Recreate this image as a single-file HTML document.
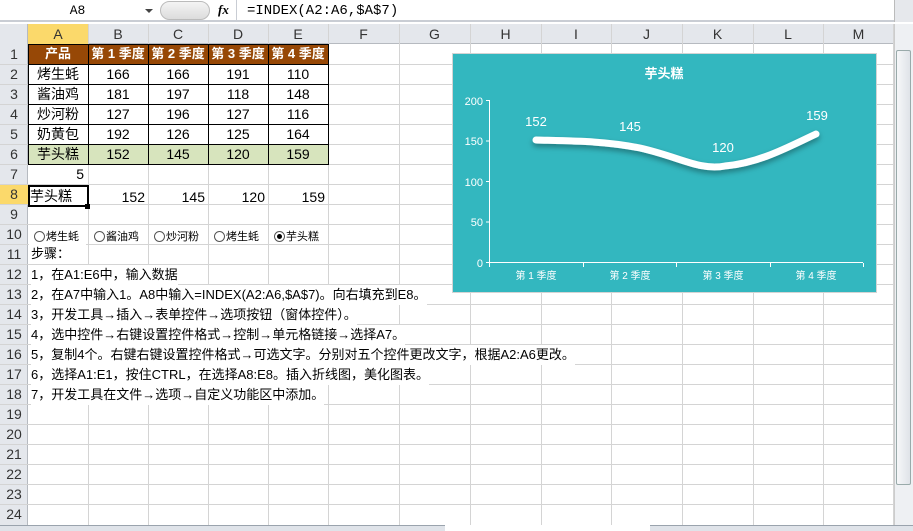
<!DOCTYPE html>
<html><head><meta charset="utf-8"><style>
*{margin:0;padding:0;box-sizing:border-box}
body{width:913px;height:531px;overflow:hidden;background:#fff;font-family:"Liberation Sans","Noto Sans CJK SC",sans-serif;font-size:13px;position:relative;color:#000}
.a{position:absolute}
.grid{left:28px;top:44px;width:866px;height:481px;
background:
linear-gradient(#fff,#fff) 0 0/0 0 no-repeat;
}
.vl{position:absolute;top:24px;width:1px;height:501px;background:#d4d4d4}
.hl{position:absolute;left:0;width:894px;height:1px;background:#d4d4d4}
.ch{position:absolute;top:24px;height:20px;text-align:center;line-height:20px;font-size:14px;color:#333}
.rh{position:absolute;left:0;width:28px;height:20px;text-align:center;line-height:20px;font-size:14px;color:#333;font-family:"Liberation Sans Narrow","Liberation Sans",sans-serif}
.c{position:absolute;height:20px;line-height:20px;text-align:center;font-size:14px;width:60px}
.t{position:absolute;left:31px;height:20px;line-height:20px;font-size:13px;white-space:nowrap}
.rb{position:absolute;top:230px;font-size:11px;line-height:14px;white-space:nowrap}
.rb i{display:inline-block;width:11px;height:11px;border:1px solid #555;border-radius:50%;vertical-align:-2px;margin-right:1px;position:relative}
</style></head><body>
<!-- formula bar -->
<div class="a" style="left:0;top:0;width:913px;height:22px;background:#fff;border-bottom:2px solid #c9cdd4"></div>
<div class="a" style="left:0;top:0;width:155px;height:22px;text-align:center;line-height:22px;font-family:'Liberation Mono',monospace;font-size:13px">A8</div>
<div class="a" style="left:145px;top:9px;width:0;height:0;border-left:4px solid transparent;border-right:4px solid transparent;border-top:4px solid #444"></div>
<div class="a" style="left:160px;top:1px;width:50px;height:19px;border:1px solid #bbb;border-radius:10px;background:linear-gradient(#f4f4f4,#dcdcdc)"></div>
<div class="a" style="left:218px;top:2px;font-family:'Liberation Serif',serif;font-style:italic;font-weight:bold;font-size:13px">fx</div>
<div class="a" style="left:236px;top:0;width:1px;height:22px;background:#c9cdd4"></div>
<div class="a" style="left:247px;top:3px;font-family:'Liberation Mono','Noto Sans CJK SC',monospace;font-size:14px">=INDEX(A2:A6,$A$7)</div>
<div class="a" style="left:894px;top:0;width:19px;height:22px;background:#e6e8ec;border-left:1px solid #bbb"></div>
<!-- header row -->
<div class="a" style="left:0;top:24px;width:894px;height:20px;background:#e4e7ec;border-bottom:1px solid #b6bac0"></div>
<div class="a" style="left:0;top:24px;width:28px;height:501px;background:#e4e7ec;border-right:1px solid #b6bac0"></div>
<div class="a" style="left:28px;top:24px;width:60px;height:20px;background:#fbd96b"></div>
<div class="a" style="left:0;top:184px;width:28px;height:20px;background:#fbd96b"></div>
<div class="ch" style="left:28px;width:60px">A</div><div class="ch" style="left:88px;width:60px">B</div><div class="ch" style="left:148px;width:60px">C</div><div class="ch" style="left:208px;width:60px">D</div><div class="ch" style="left:268px;width:60px">E</div>
<div class="ch" style="left:328px;width:71px">F</div><div class="ch" style="left:399px;width:71px">G</div><div class="ch" style="left:470px;width:71px">H</div><div class="ch" style="left:541px;width:70px">I</div><div class="ch" style="left:611px;width:71px">J</div><div class="ch" style="left:682px;width:71px">K</div><div class="ch" style="left:753px;width:70px">L</div><div class="ch" style="left:823px;width:71px">M</div>
<!-- grid lines -->
<div class="vl" style="left:88px"></div><div class="vl" style="left:148px"></div><div class="vl" style="left:208px"></div><div class="vl" style="left:268px"></div><div class="vl" style="left:328px"></div><div class="vl" style="left:399px"></div><div class="vl" style="left:470px"></div><div class="vl" style="left:541px"></div><div class="vl" style="left:611px"></div><div class="vl" style="left:682px"></div><div class="vl" style="left:753px"></div><div class="vl" style="left:823px"></div><div class="vl" style="left:893px"></div>
<div class="hl" style="top:64px"></div><div class="hl" style="top:84px"></div><div class="hl" style="top:104px"></div><div class="hl" style="top:124px"></div><div class="hl" style="top:144px"></div><div class="hl" style="top:164px"></div><div class="hl" style="top:184px"></div><div class="hl" style="top:204px"></div><div class="hl" style="top:224px"></div><div class="hl" style="top:244px"></div><div class="hl" style="top:264px"></div><div class="hl" style="top:284px"></div><div class="hl" style="top:304px"></div><div class="hl" style="top:324px"></div><div class="hl" style="top:344px"></div><div class="hl" style="top:364px"></div><div class="hl" style="top:384px"></div><div class="hl" style="top:404px"></div><div class="hl" style="top:424px"></div><div class="hl" style="top:444px"></div><div class="hl" style="top:464px"></div><div class="hl" style="top:484px"></div><div class="hl" style="top:504px"></div>
<!-- text rows hide vertical lines for 11-18 -->
<div class="a" style="left:29px;top:245px;width:299px;height:159px;background:transparent"></div>
<!-- row numbers -->
<div class="rh" style="top:44px">1</div><div class="rh" style="top:64px">2</div><div class="rh" style="top:84px">3</div><div class="rh" style="top:104px">4</div><div class="rh" style="top:124px">5</div><div class="rh" style="top:144px">6</div><div class="rh" style="top:164px">7</div><div class="rh" style="top:184px">8</div><div class="rh" style="top:204px">9</div><div class="rh" style="top:224px">10</div><div class="rh" style="top:244px">11</div><div class="rh" style="top:264px">12</div><div class="rh" style="top:284px">13</div><div class="rh" style="top:304px">14</div><div class="rh" style="top:324px">15</div><div class="rh" style="top:344px">16</div><div class="rh" style="top:364px">17</div><div class="rh" style="top:384px">18</div><div class="rh" style="top:404px">19</div><div class="rh" style="top:424px">20</div><div class="rh" style="top:444px">21</div><div class="rh" style="top:464px">22</div><div class="rh" style="top:484px">23</div><div class="rh" style="top:504px">24</div>
<!-- table -->
<div class="a" style="left:28px;top:44px;width:300px;height:20px;background:#974806"></div>
<div class="a" style="left:28px;top:144px;width:300px;height:20px;background:#d7e4bd"></div>
<div class="a" style="left:28px;top:44px;width:301px;height:121px;border:1px solid #000;background:
linear-gradient(#000,#000) 59px 0/1px 100% no-repeat,linear-gradient(#000,#000) 119px 0/1px 100% no-repeat,linear-gradient(#000,#000) 179px 0/1px 100% no-repeat,linear-gradient(#000,#000) 239px 0/1px 100% no-repeat,
linear-gradient(#000,#000) 0 19px/100% 1px no-repeat,linear-gradient(#000,#000) 0 39px/100% 1px no-repeat,linear-gradient(#000,#000) 0 59px/100% 1px no-repeat,linear-gradient(#000,#000) 0 79px/100% 1px no-repeat,linear-gradient(#000,#000) 0 99px/100% 1px no-repeat"></div>
<div style="color:#fff;font-weight:bold">
<div class="c" style="left:28px;top:44px;font-size:13px">产品</div><div class="c" style="left:88px;top:44px;font-size:13px">第 1 季度</div><div class="c" style="left:148px;top:44px;font-size:13px">第 2 季度</div><div class="c" style="left:208px;top:44px;font-size:13px">第 3 季度</div><div class="c" style="left:268px;top:44px;font-size:13px">第 4 季度</div>
</div>
<div class="c" style="left:28px;top:64px">烤生蚝</div><div class="c" style="left:88px;top:64px">166</div><div class="c" style="left:148px;top:64px">166</div><div class="c" style="left:208px;top:64px">191</div><div class="c" style="left:268px;top:64px">110</div>
<div class="c" style="left:28px;top:84px">酱油鸡</div><div class="c" style="left:88px;top:84px">181</div><div class="c" style="left:148px;top:84px">197</div><div class="c" style="left:208px;top:84px">118</div><div class="c" style="left:268px;top:84px">148</div>
<div class="c" style="left:28px;top:104px">炒河粉</div><div class="c" style="left:88px;top:104px">127</div><div class="c" style="left:148px;top:104px">196</div><div class="c" style="left:208px;top:104px">127</div><div class="c" style="left:268px;top:104px">116</div>
<div class="c" style="left:28px;top:124px">奶黄包</div><div class="c" style="left:88px;top:124px">192</div><div class="c" style="left:148px;top:124px">126</div><div class="c" style="left:208px;top:124px">125</div><div class="c" style="left:268px;top:124px">164</div>
<div class="c" style="left:28px;top:144px">芋头糕</div><div class="c" style="left:88px;top:144px">152</div><div class="c" style="left:148px;top:144px">145</div><div class="c" style="left:208px;top:144px">120</div><div class="c" style="left:268px;top:144px">159</div>
<div class="c" style="left:28px;top:164px;text-align:right;padding-right:4px">5</div>
<div class="a" style="left:28px;top:185px;width:61px;height:22px;border:2px solid #000;background:#fff"></div>
<div class="a" style="left:85px;top:204px;width:5px;height:5px;background:#000"></div>
<div class="c" style="left:30px;top:186px;text-align:left">芋头糕</div>
<div class="c" style="left:88px;top:187px;text-align:right;padding-right:3px">152</div><div class="c" style="left:148px;top:187px;text-align:right;padding-right:3px">145</div><div class="c" style="left:208px;top:187px;text-align:right;padding-right:3px">120</div><div class="c" style="left:268px;top:187px;text-align:right;padding-right:3px">159</div>
<!-- radios -->
<div class="rb" style="left:34px"><i></i>烤生蚝</div><div class="rb" style="left:94px"><i></i>酱油鸡</div><div class="rb" style="left:154px"><i></i>炒河粉</div><div class="rb" style="left:214px"><i></i>烤生蚝</div>
<div class="rb" style="left:274px"><i><b style="position:absolute;left:2px;top:2px;width:5px;height:5px;border-radius:50%;background:#000"></b></i>芋头糕</div>
<!-- steps -->
<div style="position:absolute;left:0;top:0">
<div class="t" style="top:244px;background:#fff;width:57px;left:29px;padding-left:2px">步骤：</div>
<div class="t" style="top:265px;background:#fff">1，在A1:E6中，输入数据</div>
<div class="t" style="top:285px;background:#fff">2，在A7中输入1。A8中输入=INDEX(A2:A6,$A$7)。向右填充到E8。</div>
<div class="t" style="top:305px;background:#fff">3，开发工具→插入→表单控件→选项按钮（窗体控件）。</div>
<div class="t" style="top:325px;background:#fff">4，选中控件→右键设置控件格式→控制→单元格链接→选择A7。</div>
<div class="t" style="top:345px;background:#fff">5，复制4个。右键右键设置控件格式→可选文字。分别对五个控件更改文字，根据A2:A6更改。</div>
<div class="t" style="top:365px;background:#fff">6，选择A1:E1，按住CTRL，在选择A8:E8。插入折线图，美化图表。</div>
<div class="t" style="top:385px;background:#fff">7，开发工具在文件→选项→自定义功能区中添加。</div>
</div>
<!-- chart -->
<svg class="a" style="left:452px;top:53px" width="426" height="240" viewBox="452 53 426 240">
<defs><filter id="sh" x="-10%" y="-50%" width="120%" height="200%"><feDropShadow dx="0" dy="3" stdDeviation="3" flood-color="#000" flood-opacity="0.35"/></filter></defs>
<rect x="452.5" y="53.5" width="424" height="239" fill="#33b7bf" stroke="#d4d4d4"/>
<text x="664" y="78" fill="#fff" font-size="13" font-weight="bold" text-anchor="middle" font-family="Liberation Sans,Noto Sans CJK SC,sans-serif">芋头糕</text>
<g stroke="#fff" stroke-width="1" fill="none">
<path d="M489.5 100V262.5H863"/>
<path d="M486 100.5h4M486 141h4M486 181.5h4M486 222h4M486 262.5h4M489.5 263v4M583.5 263v4M676.5 263v4M770.5 263v4M863.5 263v4"/>
</g>
<g fill="#fff" font-size="11" font-family="Liberation Sans,sans-serif" text-anchor="end">
<text x="483" y="105">200</text><text x="483" y="145">150</text><text x="483" y="186">100</text><text x="483" y="226">50</text><text x="483" y="267">0</text>
</g>
<g fill="#fff" font-size="10" font-family="Liberation Sans,Noto Sans CJK SC,sans-serif" text-anchor="middle">
<text x="536" y="279">第 1 季度</text><text x="630" y="279">第 2 季度</text><text x="723" y="279">第 3 季度</text><text x="816" y="279">第 4 季度</text>
</g>
<path d="M536 140 C575 141,605 141,640 148 C680 157,700 171,725 166 C760 163,790 146,816 134" stroke="#fff" stroke-width="7" fill="none" stroke-linecap="round" filter="url(#sh)"/>
<g fill="#fff" font-size="13" font-family="Liberation Sans,sans-serif" text-anchor="middle">
<text x="536" y="126">152</text><text x="630" y="131">145</text><text x="723" y="152">120</text><text x="817" y="120">159</text>
</g>
</svg>
<!-- scrollbar -->
<div class="a" style="left:894px;top:24px;width:19px;height:502px;background:#eef0f3;border-left:1px solid #ccc"></div>
<div class="a" style="left:896px;top:50px;width:15px;height:435px;border:1px solid #9aa;border-radius:2px;background:linear-gradient(90deg,#f6f7f9,#dfe3e8)"></div>
<!-- tabs -->
<div class="a" style="left:0;top:525px;width:913px;height:6px;background:#dfe3e9;border-top:1px solid #9aa3ad"></div>
<div class="a" style="left:445px;top:525px;width:205px;height:6px;background:#fff"></div>
</body></html>
